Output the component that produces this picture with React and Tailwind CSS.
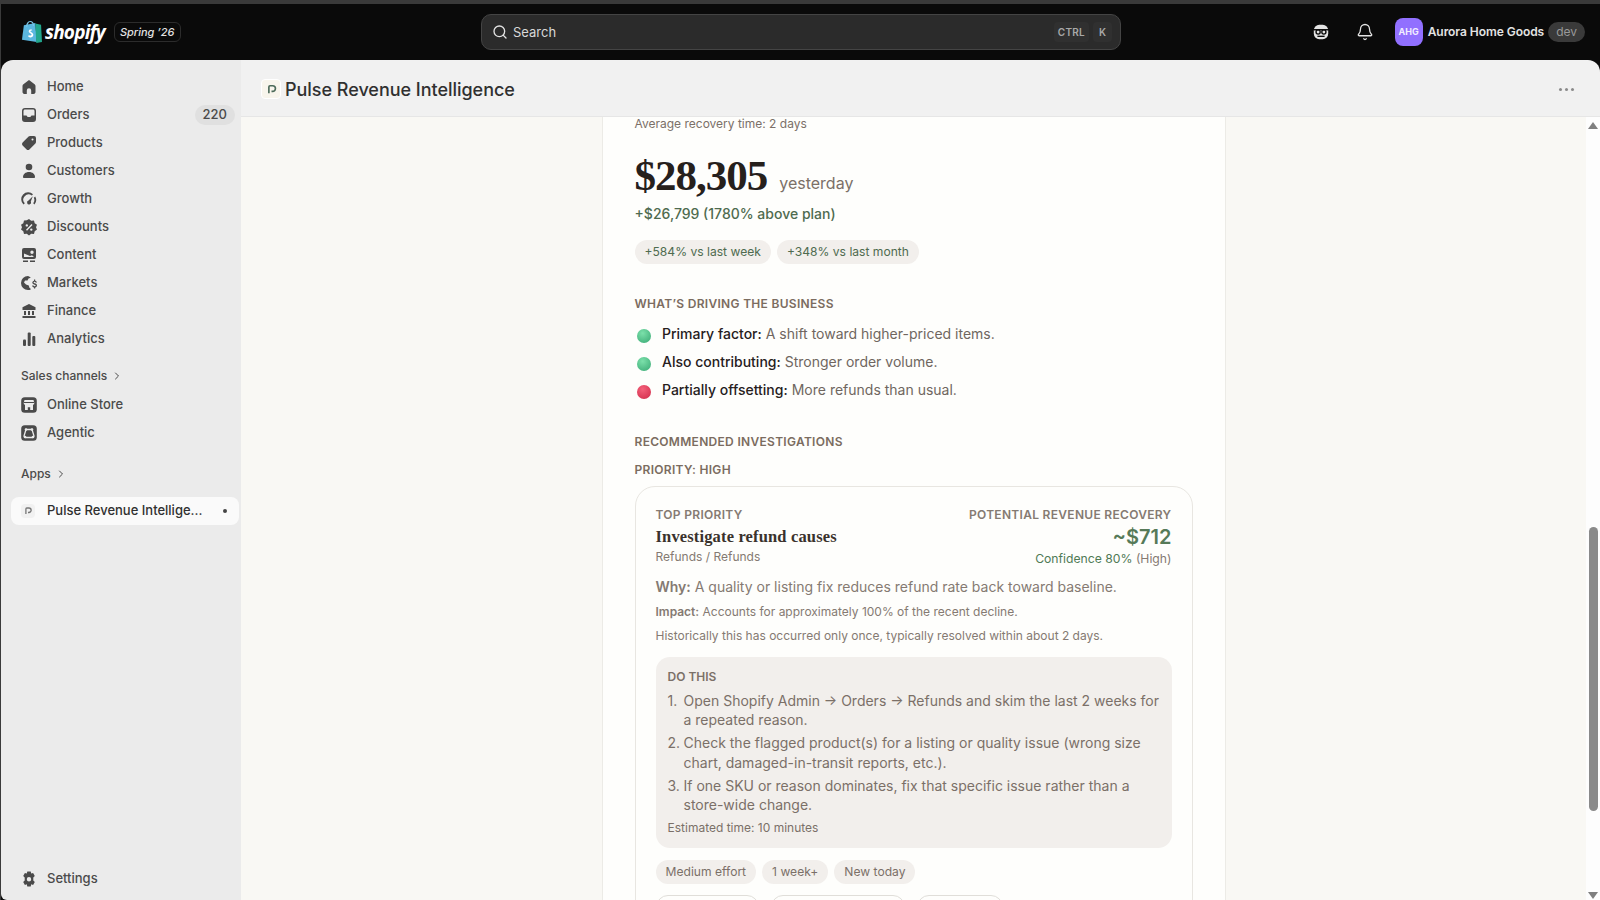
import { Search, Bell, ChevronRight } from "lucide-react";

const I = ({ children }) => (
	<svg viewBox="0 0 20 20" className="w-5 h-5 shrink-0" fill="#4a4a4a">
		{children}
	</svg>
);

const icons = {
	Home: <I><path d="M10 3 4.400 7.200A2.500 2.500 0 0 0 3.500 9v6c0 1.100.9 2 2 2h2.300v-3.600a2.200 2.200 0 0 1 4.400 0V17h2.300c1.100 0 2-.9 2-2V9a2.500 2.500 0 0 0-.9-1.800z" /></I>,
	Orders: <I><path fillRule="evenodd" d="M6 3h8a3 3 0 0 1 3 3v8a3 3 0 0 1-3 3H6a3 3 0 0 1-3-3V6a3 3 0 0 1 3-3M4.500 6v4.500h3l1.200 1.500h2.600l1.200-1.500h3V6c0-.8-.7-1.500-1.500-1.500H6C5.200 4.500 4.500 5.200 4.500 6" /></I>,
	Products: <I><path fillRule="evenodd" d="M11 3h4a2 2 0 0 1 2 2v4a2 2 0 0 1-.6 1.400l-6 6a2 2 0 0 1-2.800 0l-4-4a2 2 0 0 1 0-2.800l6-6A2 2 0 0 1 11 3m2.500 2.500a1 1 0 1 0 0 2 1 1 0 0 0 0-2" /></I>,
	Customers: <I><circle cx="10" cy="6" r="3.300" /><path d="M4 16.200c0-3 2.500-5.200 6-5.200s6 2.200 6 5.200c0 .5-.4.800-.8.800H4.800c-.4 0-.8-.3-.8-.8" /></I>,
	Growth: <I><path d="M4.500 15.500A7 7 0 0 1 14 5.200l-1.200 1.200A5.300 5.300 0 0 0 5.800 14.300zM16.200 7.500a7 7 0 0 1-.7 8l-1.300-1.200a5.300 5.300 0 0 0 .6-5.600z" /><path d="m13.800 7.300-2 5.200a2 2 0 1 1-2.300-.9z" /></I>,
	Discounts: <I><path fillRule="evenodd" d="m10 2 2.200 1.700 2.800-.2.700 2.700 2.300 1.600-1 2.400 1 2.400-2.300 1.600-.7 2.700-2.800-.2L10 18.400l-2.200-1.700-2.800.2-.7-2.700L2 12.600l1-2.400-1-2.400 2.300-1.600L5 3.500l2.800-.2zM12.500 7 7 12.800l1 .9 5.500-5.800zM7.800 7.200a1.200 1.200 0 1 0 0 2.400 1.200 1.200 0 0 0 0-2.400m4.500 4.200a1.200 1.200 0 1 0 0 2.400 1.200 1.200 0 0 0 0-2.400" /></I>,
	Content: <I><path fillRule="evenodd" d="M5 3h10a2 2 0 0 1 2 2v7a2 2 0 0 1-2 2H5a2 2 0 0 1-2-2V5a2 2 0 0 1 2-2m8 2.500a1.700 1.700 0 1 0 0 3.400 1.700 1.700 0 0 0 0-3.400M5 8.500v3.500h10l-2-1.800-2 .8z" /><path d="M4 15.500h5V17H4zm7 0h5V17h-5z" /></I>,
	Markets: <I><path d="M9 3a7 7 0 0 0 0 14c1 0 2-.2 2.800-.6a4 4 0 0 1-.6-1.400h-.7l-.7-2.500-2.800-1L5 9.500 6 7.500h2.500l1-2 2.300-.7A6 6 0 0 0 9 3" /><path d="M15 6.500h1.200v1.200c1 .2 1.800.9 1.800 1.800h-1.500c0-.4-.4-.7-.9-.7s-1 .3-1 .7.400.6 1.100.8c1.200.3 2.300.8 2.300 2.200 0 1-.8 1.700-1.800 1.900v1.100H15v-1.100c-1.100-.2-1.900-1-1.900-2h1.500c0 .5.500.8 1 .8s1.100-.3 1.100-.7-.4-.6-1.200-.8c-1.100-.3-2.200-.8-2.200-2.100 0-1 .8-1.700 1.700-1.900z" /></I>,
	Finance: <I><path d="M10 3 3.500 6.300V9h13V6.300z" /><path d="M5 10h2v4H5zm4 0h2v4H9zm4 0h2v4h-2zM3.500 15h13v2h-13z" /></I>,
	Analytics: <I><rect x="4" y="10.500" width="3" height="6.500" rx="1" /><rect x="8.700" y="3.500" width="3" height="13.500" rx="1" /><rect x="13.300" y="7" width="3" height="10" rx="1" /></I>,
	"Online Store": (
		<I>
			<rect x="2.200" y="2.200" width="15.600" height="15.600" rx="3.500" />
			<path d="M5.500 5h9l.8 3a1.600 1.600 0 0 1-1.300 1.800V15h-2.800v-2.800H8.800V15H6V9.800A1.600 1.600 0 0 1 4.700 8z" fill="#ebebeb" />
			<path d="M5 7.500h10" stroke="#4a4a4a" strokeWidth="1" />
		</I>
	),
	Agentic: (
		<I>
			<rect x="2.200" y="2.200" width="15.600" height="15.600" rx="3.500" />
			<path d="M7 6.500h6l2 6.500-1.500 1.500h-7L5 13z" fill="none" stroke="#ebebeb" strokeWidth="1.300" />
			<circle cx="7" cy="6.500" r="1.300" fill="#ebebeb" />
			<circle cx="13" cy="6.500" r="1.300" fill="#ebebeb" />
			<circle cx="6" cy="14" r="1.300" fill="#ebebeb" />
			<circle cx="14" cy="14" r="1.300" fill="#ebebeb" />
		</I>
	),
	Settings: <I><path fillRule="evenodd" d="M8.300 2.500h3.400l.5 2.100 1.900-.6 1.700 3-1.500 1.500v2.900l1.500 1.500-1.700 3-1.900-.6-.5 2.100H8.300l-.5-2.100-1.900.6-1.700-3 1.500-1.500V8.500L4.200 7l1.700-3 1.900.6zM10 8a2.200 2.200 0 1 0 0 4.400A2.200 2.200 0 0 0 10 8" /></I>,
};

const NavRow = ({ label, badge }) => (
	<div className="flex items-center h-7 pl-[18px] pr-[6px] text-[13px] font-medium text-[#4a4a4a]">
		{icons[label]}
		<span className="ml-[8px]">{label}</span>
		{badge && (
			<span className="ml-auto h-5 px-2 flex items-center rounded-full bg-[#e0e0e0] text-[13px] text-[#4a4a4a]">
				{badge}
			</span>
		)}
	</div>
);

const PulseMark = ({ className, stroke }) => (
	<svg viewBox="0 0 20 20" className={className} fill="none">
		<path d="M6.500 15V6.500a1.500 1.500 0 0 1 1.500-1.500h3.500a3.500 3.500 0 0 1 0 7.500H10" stroke={stroke} strokeWidth="2.200" />
	</svg>
);

const Chip = ({ children, green }) => (
	<span className={`h-6 px-[10px] flex items-center rounded-full bg-[#f2efec] text-[12.100px] ${green ? "text-[#4f6b4f]" : "text-[#7b7068]"}`}>
		{children}
	</span>
);

const Driver = ({ color, label, text }) => (
	<div className="flex items-center h-7 text-[14px]">
		<span className={`w-[14px] h-[14px] ml-[2px] mt-[6px] rounded-full ${color}`} />
		<span className="ml-[11.500px] font-medium text-[#26201c]">{label}</span>
		<span className="ml-1 text-[#6f6660]">{text}</span>
	</div>
);

const Step = ({ n, children }) => (
	<li className="flex">
		<span className="w-4 shrink-0">{n}.</span>
		<span>{children}</span>
	</li>
);

export default function App() {
	return (
		<div className="w-[1600px] h-[900px] overflow-hidden bg-[#0a0a0a] flex flex-col border-t-4 border-l border-[#3a3a3a] font-['Inter',sans-serif]">
			<header className="h-[56px] shrink-0 flex items-center pl-[20px] pr-[15px]">
				<div className="w-[460px] shrink-0 flex items-center">
					<svg viewBox="0 0 22 25" className="w-[21px] h-[24px]">
						<path d="M3 5.500 15 3l1.500 20L1 20.500z" fill="#5bb7e0" />
						<path d="M15 3.500 21 5l1 18-6 1z" fill="#21a68d" />
						<path d="M6 7c0-3 1.500-5.500 3.500-5.500S13 3.500 13 6" stroke="#7dc6e8" strokeWidth="1.300" fill="none" />
						<path d="M11.800 10.300c-.8-.4-3.700-.8-3.700 1.500 0 2 3 2.200 3 3.700 0 1-1.600 1-3 .2l-.5 1.900c2 1 5.300.8 5.300-2.200 0-2.300-3-2.500-3-3.700 0-.7 1-.9 1.500-.7z" fill="#fff" />
					</svg>
					<span className="ml-[3px] text-[19px] leading-none font-bold italic tracking-[-0.8px] text-white font-['Open_Sans',sans-serif]">shopify</span>
					<span className="ml-[9px] h-5 px-[5px] flex items-center rounded-md border border-[#2c2c2c] text-[11px] italic font-medium text-[#e3e3e3]">Spring ’26</span>
				</div>

				<div className="w-[640px] h-9 flex items-center pl-[10px] pr-2 rounded-[10px] bg-[#2b2b2b] border border-[#444]">
					<Search className="w-4 h-4 text-[#e3e3e3]" strokeWidth={2} />
					<span className="ml-[5px] mt-px text-[13px] text-[#d8d8d8]">Search</span>
					<span className="ml-auto h-5 px-1 flex items-center rounded bg-[#303030] text-[10px] font-semibold tracking-wide text-[#a8a8a8]">CTRL</span>
					<span className="ml-1 h-5 px-[6px] flex items-center rounded bg-[#303030] text-[10px] font-semibold text-[#a8a8a8]">K</span>
				</div>

				<svg viewBox="0 0 20 20" className="ml-auto w-[18px] h-[18px]" fill="none">
					<rect x="2" y="2" width="16" height="16" rx="6" fill="#e3e3e3" />
					<path d="M1 7.500h18" stroke="#0a0a0a" strokeWidth="1.600" />
					<circle cx="6.800" cy="10" r="2.300" stroke="#0a0a0a" strokeWidth="1.500" />
					<circle cx="13.200" cy="10" r="2.300" stroke="#0a0a0a" strokeWidth="1.500" />
					<path d="M6 14.800h8" stroke="#0a0a0a" strokeWidth="1.500" />
				</svg>
				<Bell className="ml-[26px] w-[18px] h-[18px] text-[#e3e3e3]" strokeWidth={1.700} />
				<span className="ml-[21px] w-7 h-7 flex items-center justify-center rounded-lg bg-[#9170ff] text-[9px] font-bold text-[#f2edff]">AHG</span>
				<span className="ml-[5px] text-[12px] font-semibold tracking-[-0.05px] text-[#e3e3e3]">Aurora Home Goods</span>
				<span className="ml-1 h-5 px-2 flex items-center rounded-full bg-[#3a3a3a] text-[12px] text-[#999]">dev</span>
			</header>

			<div className="flex-1 min-h-0 flex rounded-t-[12px] overflow-hidden">
				<aside className="w-[240px] shrink-0 bg-[#ebebeb] rounded-bl-[6px] flex flex-col pt-[13px]">
					{["Home", "Orders", "Products", "Customers", "Growth", "Discounts", "Content", "Markets", "Finance", "Analytics"].map((n) => (
						<NavRow key={n} label={n} badge={n === "Orders" ? "220" : null} />
					))}
					<div className="mt-[14px] h-[18px] pl-[20px] flex items-center text-[12px] font-medium text-[#4a4a4a]">
						Sales channels <ChevronRight className="ml-1 w-3 h-3" />
					</div>
					<div className="mt-[6px]">
						<NavRow label="Online Store" />
						<NavRow label="Agentic" />
					</div>
					<div className="mt-[18px] h-[18px] pl-[20px] flex items-center text-[12px] font-medium text-[#4a4a4a]">
						Apps <ChevronRight className="ml-1 w-3 h-3" />
					</div>
					<div className="mt-[14px] ml-[10px] mr-[2px] h-7 flex items-center pl-[10px] pr-[12px] rounded-lg bg-[#fafafa] text-[13px] font-medium text-[#303030]">
						<span className="w-[14px] h-[14px] rounded-sm bg-[#f1f1f1] flex items-center justify-center">
							<PulseMark className="w-3 h-3" stroke="#777" />
						</span>
						<span className="ml-[12px]">Pulse Revenue Intellige...</span>
						<span className="ml-auto w-1 h-1 rounded-full bg-[#444]" />
					</div>
					<div className="mt-auto mb-[7px]">
						<NavRow label="Settings" />
					</div>
				</aside>

				<main className="flex-1 min-w-0 flex flex-col">
					<div className="h-[57px] shrink-0 flex items-center pl-[20px] pr-[26px] pt-[2px] bg-[#f1f1f1] border-b border-[#e6e6e6]">
						<span className="w-5 h-5 rounded bg-[#f8f5ec] border border-white flex items-center justify-center">
							<PulseMark className="w-[15px] h-[15px]" stroke="#4d6b5a" />
						</span>
						<h1 className="ml-1 text-[18px] font-medium tracking-[-0.03px] text-[#303030]">Pulse Revenue Intelligence</h1>
						<span className="ml-auto flex gap-[3px]">
							<i className="w-[3px] h-[3px] rounded-full bg-[#8a8a8a]" />
							<i className="w-[3px] h-[3px] rounded-full bg-[#8a8a8a]" />
							<i className="w-[3px] h-[3px] rounded-full bg-[#8a8a8a]" />
						</span>
					</div>

					<div className="flex-1 min-h-0 flex overflow-hidden">
						<div className="flex-1 min-w-0 bg-[#f9f8f4] flex justify-center">
							<section className="w-[624px] h-[900px] shrink-0 bg-[#fefefc] border-x border-[#ecebe6] px-[32px]">
								<p className="text-[12px] leading-[14px] text-[#7b7068]">Average recovery time: 2 days</p>

								<div className="mt-[21px] h-[48px] flex items-end">
									<span className="text-[43px] leading-[48px] font-bold tracking-[-1px] text-[#26201c] font-['Liberation_Serif',serif]">$28,305</span>
									<span className="ml-[12px] mb-[5px] text-[16px] text-[#7b7068]">yesterday</span>
								</div>
								<p className="mt-[4px] text-[14px] leading-[20px] font-medium text-[#4f6b4f]">+$26,799 (1780% above plan)</p>
								<div className="mt-[16px] flex gap-[6px]">
									<Chip green>+584% vs last week</Chip>
									<Chip green>+348% vs last month</Chip>
								</div>

								<h2 className="mt-[32px] text-[12px] leading-[16px] font-semibold tracking-[0.3px] text-[#7b6c60]">WHAT’S DRIVING THE BUSINESS</h2>
								<div className="mt-[7px]">
									<Driver color="bg-[radial-gradient(circle_at_40%_30%,#7be0aa,#38a873)]" label="Primary factor:" text="A shift toward higher-priced items." />
									<Driver color="bg-[radial-gradient(circle_at_40%_30%,#7be0aa,#38a873)]" label="Also contributing:" text="Stronger order volume." />
									<Driver color="bg-[radial-gradient(circle_at_40%_30%,#f4607a,#cf2a48)]" label="Partially offsetting:" text="More refunds than usual." />
								</div>

								<h2 className="mt-[31px] text-[12px] leading-[16px] font-semibold tracking-[0.3px] text-[#7b6c60]">RECOMMENDED INVESTIGATIONS</h2>
								<h3 className="mt-[12px] text-[12px] leading-[16px] font-semibold tracking-[0.3px] text-[#7b6c60]">PRIORITY: HIGH</h3>

								<div className="mt-[8px] rounded-[20px] border border-[#e8e6e1] px-[20px] pt-[20px]">
									<div className="flex justify-between">
										<div>
											<p className="text-[12px] leading-[16px] font-semibold tracking-[0.3px] text-[#857a72]">TOP PRIORITY</p>
											<p className="mt-[3px] text-[16.500px] leading-[22px] font-bold tracking-[0.15px] text-[#3a322c] font-['Liberation_Serif',serif]">Investigate refund causes</p>
											<p className="mt-[1px] text-[12px] leading-[16px] text-[#857a72]">Refunds / Refunds</p>
										</div>
										<div className="text-right">
											<p className="text-[12px] leading-[16px] font-semibold tracking-[0.3px] text-[#857a72]">POTENTIAL REVENUE RECOVERY</p>
											<p className="mt-[3px] text-[20px] leading-[22px] font-semibold text-[#567a58]">~$712</p>
											<p className="mt-[3px] text-[12.200px] leading-[16px] text-[#857a72]">
												<span className="text-[#4f7a55]">Confidence 80%</span> (High)
											</p>
										</div>
									</div>
									<p className="mt-[10px] text-[14px] leading-[20px] text-[#857a72]"><b className="font-semibold">Why:</b> A quality or listing fix reduces refund rate back toward baseline.</p>
									<p className="mt-[7px] text-[12px] leading-[16px] text-[#857a72]"><b className="font-semibold">Impact:</b> Accounts for approximately 100% of the recent decline.</p>
									<p className="mt-[8px] text-[12px] leading-[16px] text-[#857a72]">Historically this has occurred only once, typically resolved within about 2 days.</p>

									<div className="mt-[13px] rounded-[14px] bg-[#f2efec] pl-[12px] pr-[10px] pt-[12px] pb-[12px] text-[#7b7068]">
										<p className="text-[12px] leading-[16px] font-semibold">DO THIS</p>
										<ol className="mt-[6px] text-[14px] leading-[19.200px] flex flex-col gap-1">
											<Step n={1}>Open Shopify Admin → Orders → Refunds and skim the last 2 weeks for a repeated reason.</Step>
											<Step n={2}>Check the flagged product(s) for a listing or quality issue (wrong size chart, damaged-in-transit reports, etc.).</Step>
											<Step n={3}>If one SKU or reason dominates, fix that specific issue rather than a store-wide change.</Step>
										</ol>
										<p className="mt-[6px] text-[12px] leading-[16px]">Estimated time: 10 minutes</p>
									</div>

									<div className="mt-[12px] flex gap-[6px]">
										<Chip>Medium effort</Chip>
										<Chip>1 week+</Chip>
										<Chip>New today</Chip>
									</div>
									<div className="mt-[11px] flex gap-[12px]">
										<span className="w-[103px] h-6 rounded-full border border-[#e0ded9]" />
										<span className="w-[134px] h-6 rounded-full border border-[#e0ded9]" />
										<span className="w-[86px] h-6 rounded-full border border-[#e0ded9]" />
									</div>
								</div>
							</section>
						</div>

						<div className="w-[14px] shrink-0 bg-[#fdfdfd] flex flex-col items-center">
							<span className="mt-[5px] w-0 h-0 border-x-[5px] border-x-transparent border-b-[7px] border-b-[#7f7f7f]" />
							<span className="mt-[398px] w-[9px] h-[284px] rounded-full bg-[#8a8a8a]" />
							<span className="mt-[81px] w-0 h-0 border-x-[5px] border-x-transparent border-t-[7px] border-t-[#7f7f7f]" />
						</div>
					</div>
				</main>
			</div>
		</div>
	);
}
